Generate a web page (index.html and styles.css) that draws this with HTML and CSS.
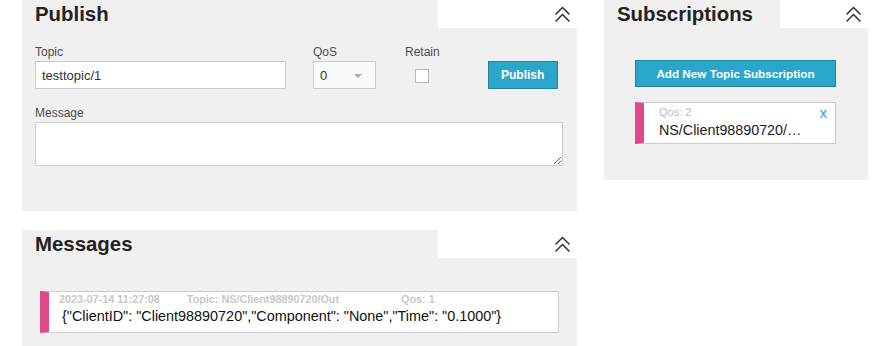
FILE: index.html
```html
<!DOCTYPE html>
<html lang="en">
<head>
  <meta charset="UTF-8" />
  <title>MQTT Websocket Client</title>
  <link rel="stylesheet" href="styles.css">
</head>
<body>
  <div class="page">

    <div class="column-left">
      <!-- Publish -->
      <section class="panel publish">
        <div class="panel-head">
          <h2 class="panel-title">Publish</h2>
          <div class="panel-toggle">
            <svg width="17" height="17" viewBox="0 0 17 17"><polyline points="1.5,8.5 8.5,1.5 15.5,8.5" /><polyline points="1.5,15.5 8.5,8.5 15.5,15.5" /></svg>
          </div>
        </div>
        <div class="panel-body">
          <div class="publish-row">
            <div class="field field-topic">
              <label>Topic</label>
              <input type="text" value="testtopic/1">
            </div>
            <div class="field field-qos">
              <label>QoS</label>
              <div class="select">
                <span>0</span>
                <span class="select-arrow"></span>
              </div>
            </div>
            <div class="field field-retain">
              <label>Retain</label>
              <div class="check-wrap"><span class="check"></span></div>
            </div>
            <button class="btn btn-publish">Publish</button>
          </div>
          <div class="field field-message">
            <label>Message</label>
            <textarea></textarea>
          </div>
        </div>
      </section>

      <!-- Messages -->
      <section class="panel messages">
        <div class="panel-head">
          <h2 class="panel-title">Messages</h2>
          <div class="panel-toggle">
            <svg width="17" height="17" viewBox="0 0 17 17"><polyline points="1.5,8.5 8.5,1.5 15.5,8.5" /><polyline points="1.5,15.5 8.5,8.5 15.5,15.5" /></svg>
          </div>
        </div>
        <div class="panel-body">
          <div class="message">
            <div class="message-meta">
              <span class="meta-date">2023-07-14 11:27:08</span>
              <span class="meta-topic">Topic: NS/Client98890720/Out</span>
              <span class="meta-qos">Qos: 1</span>
            </div>
            <div class="message-payload">{"ClientID": "Client98890720","Component": "None","Time": "0.1000"}</div>
          </div>
        </div>
      </section>
    </div>

    <div class="column-right">
      <!-- Subscriptions -->
      <section class="panel subscriptions">
        <div class="panel-head">
          <h2 class="panel-title">Subscriptions</h2>
          <div class="panel-toggle">
            <svg width="17" height="17" viewBox="0 0 17 17"><polyline points="1.5,8.5 8.5,1.5 15.5,8.5" /><polyline points="1.5,15.5 8.5,8.5 15.5,15.5" /></svg>
          </div>
        </div>
        <div class="panel-body">
          <button class="btn btn-add">Add New Topic Subscription</button>
          <div class="sub-item">
            <div class="sub-qos">Qos: 2</div>
            <div class="sub-topic">NS/Client98890720/…</div>
            <span class="sub-close">x</span>
          </div>
        </div>
      </section>
    </div>

  </div>
</body>
</html>
```

FILE: styles.css
```css
body {
  margin: 0;
  font-family: "Liberation Sans", Arial, sans-serif;
  color: #222;
  background: #fff;
}

.page {
  display: flex;
  align-items: flex-start;
  gap: 27px;
  padding-left: 22px;
}

.column-left {
  width: 555px;
  display: flex;
  flex-direction: column;
  gap: 19px;
}

.column-right {
  width: 264px;
}

/* panels */
.panel {
  background: #f0f0f0;
}

.panel-head {
  display: flex;
  height: 28px;
}

.panel-title {
  flex: 1;
  margin: 0;
  padding-left: 13px;
  font-size: 20.4px;
  font-weight: bold;
  line-height: 28px;
  color: #222;
}

.panel-toggle {
  background: #fff;
  width: 139px;
  display: flex;
  justify-content: flex-end;
  align-items: center;
  padding-right: 6px;
  box-sizing: border-box;
}

.subscriptions .panel-toggle {
  width: 88px;
}

.panel-toggle svg polyline {
  fill: none;
  stroke: #333;
  stroke-width: 1.5;
}

/* publish */
.publish .panel-body {
  padding: 17px 14px 45px 13px;
}

.publish-row {
  display: flex;
  align-items: flex-start;
}

.field {
  display: flex;
  flex-direction: column;
  gap: 2px;
}

.field label {
  font-size: 12px;
  line-height: 14px;
  color: #4d4d4d;
}

.field-topic input {
  width: 251px;
  height: 28px;
  box-sizing: border-box;
  border: 1px solid #ccc;
  background: #fff;
  padding: 0 6px;
  font-family: "Liberation Sans", Arial, sans-serif;
  font-size: 13px;
  color: #333;
  outline: none;
}

.field-qos {
  margin-left: 27px;
}

.select {
  width: 63px;
  height: 28px;
  box-sizing: border-box;
  border: 1px solid #ccc;
  background: #fafafa;
  display: flex;
  align-items: center;
  justify-content: space-between;
  padding: 0 13px 0 6px;
  font-size: 13px;
  color: #333;
}

.select-arrow {
  width: 0;
  height: 0;
  border-left: 4px solid transparent;
  border-right: 4px solid transparent;
  border-top: 4px solid #aaa;
  margin-top: 2px;
}

.field-retain {
  margin-left: 29px;
  align-items: center;
}

.check-wrap {
  height: 28px;
  display: flex;
  align-items: center;
  padding-top: 1px;
}

.check {
  width: 14px;
  height: 14px;
  box-sizing: border-box;
  border: 1px solid #bbb;
  background: #fff;
}

.btn {
  background: #2ba6cb;
  border: 1px solid #2284a1;
  color: #fff;
  font-family: "Liberation Sans", Arial, sans-serif;
  font-weight: bold;
  font-size: 12px;
  cursor: pointer;
}

.btn-publish {
  margin-left: 48px;
  margin-top: 16px;
  width: 70px;
  height: 28px;
}

.field-message {
  margin-top: 16px;
}

.field-message textarea {
  display: block;
  width: 528px;
  height: 44px;
  box-sizing: border-box;
  border: 1px solid #ccc;
  background: #fff;
  margin: 0;
}

/* messages */
.messages .panel-body {
  padding: 33px 18px 14px 18px;
}

.message {
  background: #fff;
  border: 1px solid #ccc;
  border-left: 9px solid #dd4a87;
  height: 42px;
  box-sizing: border-box;
  padding: 1px 10px 0 10px;
}

.message-meta {
  display: flex;
  font-size: 10.8px;
  line-height: 13px;
  font-weight: bold;
  color: #c8c8c8;
}

.meta-topic {
  margin-left: 27px;
}

.meta-qos {
  margin-left: 62px;
}

.message-payload {
  margin-top: 2px;
  padding-left: 3px;
  font-size: 14.4px;
  line-height: 17px;
  color: #111;
}

/* subscriptions */
.subscriptions .panel-body {
  padding: 32px 32px 36px 31px;
}

.btn-add {
  display: block;
  width: 201px;
  height: 27px;
  font-size: 11.7px;
}

.sub-item {
  position: relative;
  margin-top: 15px;
  height: 42px;
  box-sizing: border-box;
  background: #fff;
  border: 1px solid #ccc;
  border-left: 9px solid #dd4a87;
  padding: 3px 14px 0 15px;
}

.sub-qos {
  font-size: 11px;
  line-height: 13px;
  color: #bbb;
}

.sub-topic {
  margin-top: 3px;
  font-size: 14.3px;
  line-height: 16px;
  color: #222;
  white-space: nowrap;
}

.sub-close {
  position: absolute;
  top: 1px;
  right: 8px;
  font-size: 15px;
  color: #2ba6cb;
}
```
